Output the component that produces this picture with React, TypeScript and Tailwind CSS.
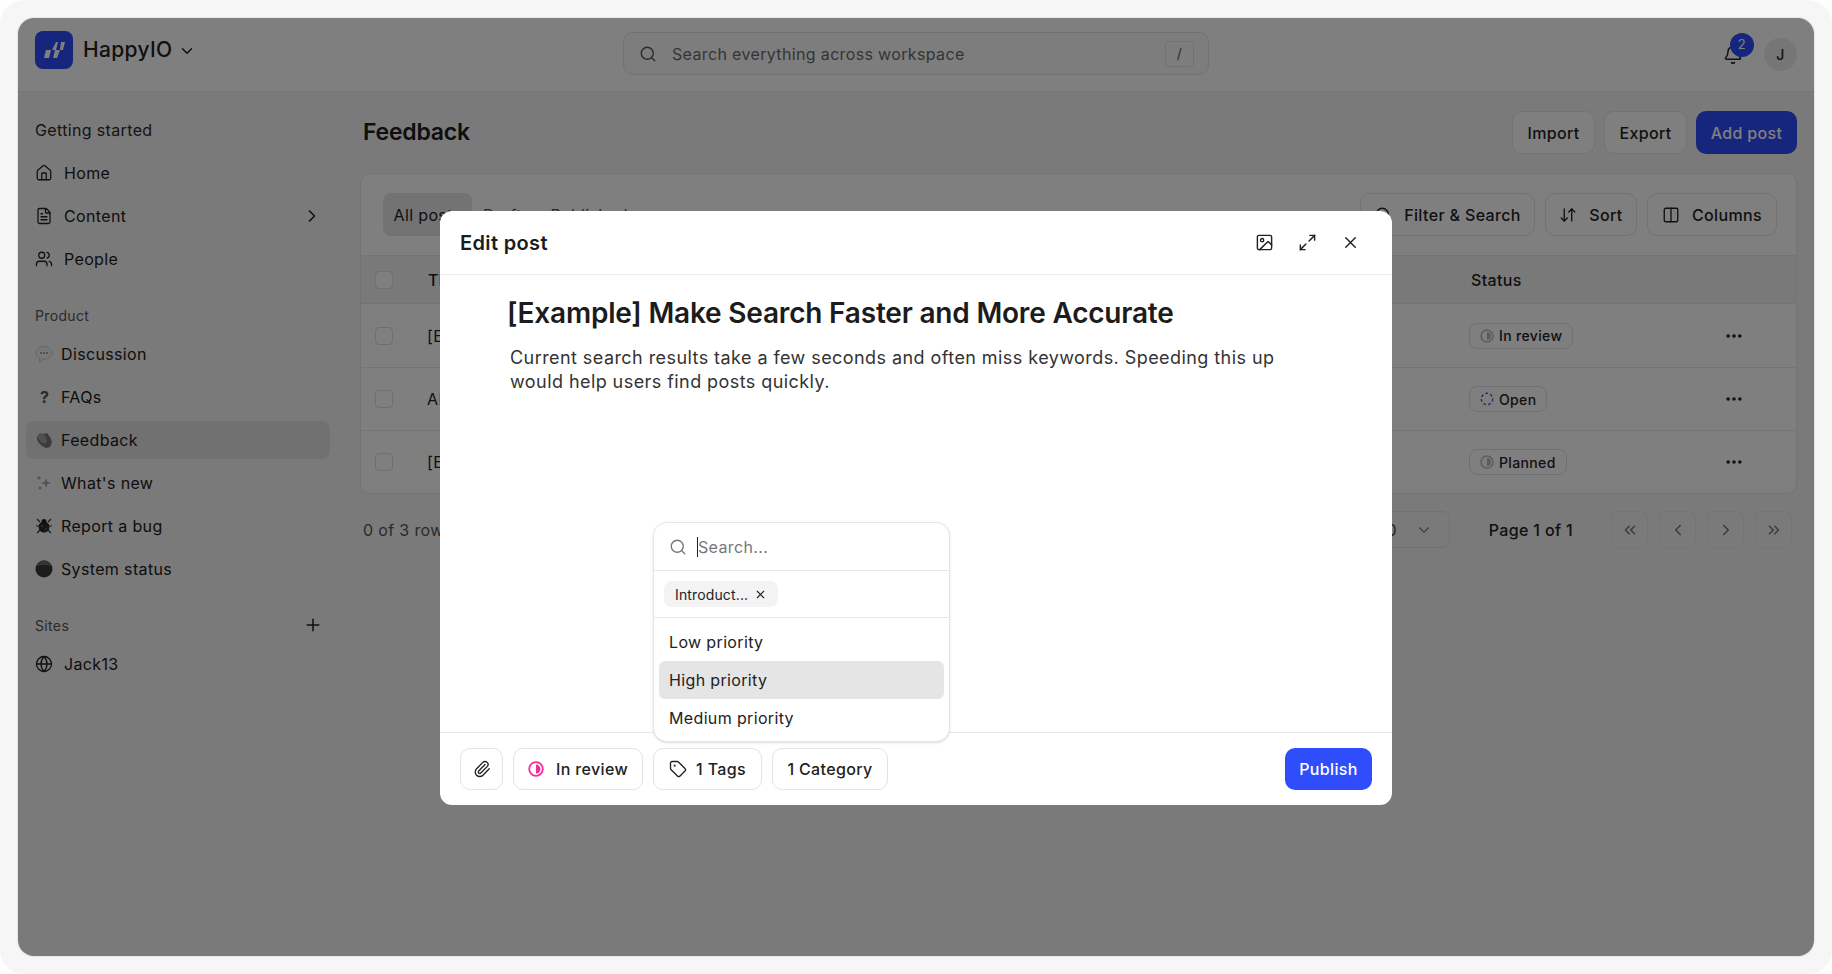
import {
  ArrowDownUp,
  ChevronDown,
  ChevronLeft,
  ChevronRight,
  ChevronsLeft,
  ChevronsRight,
  Bell,
  Columns2,
  Ellipsis,
  FileText,
  Globe,
  House,
  Image,
  Maximize2,
  Paperclip,
  Plus,
  Search,
  Tag,
  Users,
  X,
} from 'lucide-react';

const Half = ({ color, size = 16 }: { color: string; size?: number }) => (
  <svg width={size} height={size} viewBox="0 0 16 16" fill="none">
    <circle cx="8" cy="8" r="6.800" stroke={color} strokeWidth="1.800" />
    <path d="M8 3.500a4.500 4.500 0 0 1 0 9z" fill={color} />
  </svg>
);

const Dashed = () => (
  <svg width="14" height="14" viewBox="0 0 16 16" fill="none">
    <circle cx="8" cy="8" r="6.500" stroke="#4a55c8" strokeWidth="1.600" strokeDasharray="3 2.600" />
  </svg>
);

const Bubble = () => (
  <svg width="18" height="18" viewBox="0 0 18 18">
    <path d="M9 1.500c4.400 0 8 2.800 8 6.400s-3.600 6.400-8 6.400l-1 0-3.500 2.700.6-3.400C2.700 12.400 1 10.300 1 7.900 1 4.300 4.600 1.500 9 1.500z" fill="#f1f1f1" stroke="#c9c9c9" />
    <circle cx="6" cy="8" r=".8" fill="#444" />
    <circle cx="9" cy="8" r=".8" fill="#444" />
    <circle cx="12" cy="8" r=".8" fill="#444" />
  </svg>
);

const Clap = () => (
  <svg width="18" height="18" viewBox="0 0 18 18">
    <path d="M2 6l3-4 3 1 4-1 3 4 2 5-2 5-4 1-4-2-3-3-2-3z" fill="#777" />
    <path d="M2 6l3-4 3 1 3 3 1 5-3 2-4-3z" fill="#a0a0a0" />
  </svg>
);

const Sparkle = () => (
  <svg width="18" height="18" viewBox="0 0 18 18" fill="#a8a8a8">
    <path d="M11 4l1.300 3.700L16 9l-3.700 1.300L11 14l-1.300-3.700L6 9l3.700-1.300z" />
    <path d="M4 1.500l.7 1.800 1.800.7-1.800.7L4 6.500l-.7-1.800L1.500 4l1.800-.7z" />
    <path d="M5 12l.5 1.500 1.500.5-1.500.5L5 16l-.5-1.500L3 14l1.500-.5z" fill="#777" />
  </svg>
);

const Bug = () => (
  <svg width="18" height="18" viewBox="0 0 18 18" fill="none">
    <path d="M2 2l3 3M16 2l-3 3M1 9h3M17 9h-3M2 16l3-3M16 16l-3-3" stroke="#333" strokeWidth="1.200" />
    <circle cx="9" cy="10" r="5.500" fill="#2a2a2a" />
    <circle cx="9" cy="4.500" r="2.500" fill="#1e1e1e" />
    <circle cx="7" cy="9" r="1" fill="#666" />
    <circle cx="11" cy="12" r="1" fill="#666" />
  </svg>
);

const Moon = () => (
  <svg width="18" height="18" viewBox="0 0 18 18">
    <circle cx="9" cy="9" r="8.500" fill="#3a3838" />
    <path d="M1.500 6C3 2.500 6 .5 9 .5s6 2 7.500 5.500c-4-1.200-11-1.200-15 0z" fill="#6a6a6a" />
  </svg>
);

type NavItem = { label: string; icon: React.ReactNode; active?: boolean; arrow?: boolean; wide?: boolean };

const NavRow = ({ label, icon, active, arrow, wide }: NavItem) => (
  <div className={`flex h-[38px] items-center rounded-[8px] pl-[9px] pr-[8px] text-[16px] text-[#202020] ${active ? 'bg-[#e3e3e3]' : ''}`}>
    <span className={`flex h-[18px] shrink-0 items-center ${wide ? 'w-[29px]' : 'w-[26px]'}`}>{icon}</span>
    <span className="flex-1">{label}</span>
    {arrow && <ChevronRight size={20} strokeWidth={2} />}
  </div>
);

const OutlineBtn = ({ children, className = '' }: { children: React.ReactNode; className?: string }) => (
  <div className={`flex items-center justify-center rounded-[10px] border border-[#e4e4e4] bg-white text-[16px] font-[450] text-[#222] ${className}`}>
    {children}
  </div>
);

const rows = [
  { title: '[Example] Make Search Faster and More Accurate', status: 'In review', icon: <Half color="#b9b9b9" size={14} /> },
  { title: 'AI summaries for long threads', status: 'Open', icon: <Dashed /> },
  { title: '[Example] Dark mode for the dashboard', status: 'Planned', icon: <Half color="#b9b9b9" size={14} /> },
];

const Logo = () => (
  <div className="flex h-[38px] w-[38px] items-center justify-center rounded-[8px] bg-[#2f4dfa]">
    <svg width="38" height="38" viewBox="0 0 38 38" fill="#fff">
      <polygon points="11,19 16,19 14,27 9,27" />
      <polygon points="20,19 25,19 22,27 18,27" />
      <polygon points="21,11 23,11 21,19 17,19" />
      <polygon points="26,11 30,11 28,19 25,19" />
    </svg>
  </div>
);

export default function App() {
  return (
    <div className="h-[974px] w-[1832px] overflow-hidden bg-white font-['Inter',sans-serif] tracking-[0.022em]">
      <div className="h-[974px] rounded-[24px] bg-[#f6f6f6] p-[18px]">
        <div className="relative h-[938px] w-[1796px] overflow-hidden rounded-[16px] bg-[#f4f4f4] text-[#222] ring-1 ring-[#e6e6e6]">
          {/* Top bar */}
          <header className="grid h-[74px] grid-cols-[1fr_586px_1fr] items-center border-b border-[#ececec] bg-white px-[17px]">
            <div className="mb-[9px] flex items-center">
              <Logo />
              <span className="ml-[10px] text-[21px] font-medium">HappyIO</span>
              <ChevronDown size={18} strokeWidth={2} className="ml-[5px] mt-[1px]" />
            </div>
            <div className="mb-[2px] flex h-[43px] items-center rounded-[10px] border border-[#e2e2e2] bg-[#fafafa] pl-[15px] pr-[14px]">
              <Search size={18} strokeWidth={1.8} className="text-[#555]" />
              <span className="ml-[15px] flex-1 text-[16px] text-[#6b6b6b]">Search everything across workspace</span>
              <span className="flex h-[26px] w-[29px] items-center justify-center rounded-[4px] border border-[#e4e4e4] text-[14px] text-[#555]">/</span>
            </div>
            <div className="flex items-center justify-end">
              <div className="relative mr-[21px] mt-[1px]">
                <Bell size={20} strokeWidth={1.8} />
                <span className="absolute -right-[11px] -top-[12px] flex h-[24px] w-[24px] items-center justify-center rounded-full bg-[#2f4dfa] text-[13px] text-white">2</span>
              </div>
              <div className="flex h-[33px] w-[33px] items-center justify-center rounded-full bg-[#ededed] text-[14px] font-medium">J</div>
            </div>
          </header>

          <div className="flex">
            {/* Sidebar */}
            <aside className="w-[322px] shrink-0 pl-[8px] pr-[10px] pt-[28px]">
              <div className="flex h-[20px] items-center pl-[9px] text-[16px] text-[#2a2a2a]">Getting started</div>
              <div className="mt-[14px] flex flex-col gap-[5px]">
                <NavRow label="Home" icon={<House size={18} strokeWidth={1.7} />} wide />
                <NavRow label="Content" icon={<FileText size={18} strokeWidth={1.7} />} arrow wide />
                <NavRow label="People" icon={<Users size={18} strokeWidth={1.7} />} wide />
              </div>
              <div className="mt-[27px] flex h-[20px] items-center pl-[9px] text-[14px] text-[#555]">Product</div>
              <div className="mt-[10px] flex flex-col gap-[5px]">
                <NavRow label="Discussion" icon={<Bubble />} />
                <NavRow label="FAQs" icon={<span className="pl-[5px] text-[16px] font-bold text-[#555]">?</span>} />
                <NavRow label="Feedback" icon={<Clap />} active />
                <NavRow label="What's new" icon={<Sparkle />} />
                <NavRow label="Report a bug" icon={<Bug />} />
                <NavRow label="System status" icon={<Moon />} />
              </div>
              <div className="mt-[27px] flex h-[20px] items-center justify-between pl-[9px] pr-[7px] text-[14px] text-[#555]">
                Sites
                <Plus size={20} strokeWidth={1.8} className="text-[#222]" />
              </div>
              <div className="mt-[10px]">
                <NavRow label="Jack13" icon={<Globe size={18} strokeWidth={1.7} />} wide />
              </div>
            </aside>

            {/* Main */}
            <main className="min-w-0 flex-1 pl-[20px] pr-[17px] pt-[19px]">
              <div className="flex items-center justify-between">
                <h1 className="ml-[3px] text-[23px] font-semibold tracking-[-0.01em] text-[#1c1c1c]">Feedback</h1>
                <div className="flex gap-[9px]">
                  <OutlineBtn className="h-[43px] w-[83px]">Import</OutlineBtn>
                  <OutlineBtn className="h-[43px] w-[83px]">Export</OutlineBtn>
                  <div className="flex h-[43px] w-[101px] items-center justify-center rounded-[10px] bg-[#2f4dfa] text-[16px] font-[450] text-white">Add post</div>
                </div>
              </div>

              <div className="mt-[19px] overflow-hidden rounded-[10px] border border-[#e6e6e6] bg-white">
                <div className="flex h-[81px] items-center justify-between pl-[22px] pr-[19px]">
                  <div className="flex items-center text-[16px]">
                    <span className="flex h-[43px] w-[89px] items-center justify-center rounded-[8px] bg-[#e6e6e6]">All posts</span>
                    <span className="ml-[11px] text-[#555]">Drafts</span>
                    <span className="ml-[20px] text-[#555]">Published</span>
                  </div>
                  <div className="flex gap-[10px]">
                    <OutlineBtn className="h-[43px] w-[175px] gap-[12px]"><Search size={18} strokeWidth={1.8} />Filter &amp; Search</OutlineBtn>
                    <OutlineBtn className="h-[43px] w-[92px] gap-[12px]"><ArrowDownUp size={18} strokeWidth={1.8} />Sort</OutlineBtn>
                    <OutlineBtn className="h-[43px] w-[130px] gap-[12px]"><Columns2 size={18} strokeWidth={1.8} />Columns</OutlineBtn>
                  </div>
                </div>
                <div className="flex h-[49px] items-center border-y border-[#e8e8e8] bg-[#f3f3f3] pl-[14px] pr-[52px] text-[16px] font-[450]">
                  <span className="h-[18px] w-[18px] rounded-[4px] border border-[#dedede] bg-white" />
                  <span className="ml-[35px] flex-1">Title</span>
                  <span className="w-[275px] pl-[2px]">Status</span>
                </div>
                {rows.map((row, i) => (
                  <div key={row.status} className={`flex h-[63px] items-center pl-[14px] pr-[52px] ${i > 0 ? 'border-t border-[#e8e8e8]' : ''}`}>
                    <span className="h-[18px] w-[18px] rounded-[4px] border border-[#dedede] bg-white" />
                    <span className="ml-[34px] flex-1 text-[16px]">{row.title}</span>
                    <div className="flex w-[255px]">
                      <span className="inline-flex h-[26px] items-center gap-[5px] rounded-[8px] border border-[#e0e0e0] px-[10px] text-[14px] font-[450]">
                        {row.icon}
                        {row.status}
                      </span>
                    </div>
                    <Ellipsis size={20} strokeWidth={2.4} />
                  </div>
                ))}
              </div>

              <div className="mt-[17px] flex h-[37px] items-center justify-between text-[16px]">
                <span className="ml-[3px] text-[#555]">0 of 3 rows selected</span>
                <div className="mr-[5px] flex items-center">
                  <span className="mr-[16px] text-[15px] font-[450]">Rows per page</span>
                  <div className="flex h-[37px] w-[90px] items-center justify-between rounded-[8px] border border-[#e4e4e4] pl-[19px] pr-[16px] text-[#444]">
                    10
                    <ChevronDown size={18} strokeWidth={1.8} className="text-[#888]" />
                  </div>
                  <span className="ml-[39px] mr-[38px] font-[450]">Page 1 of 1</span>
                  <div className="flex gap-[11px] text-[#777]">
                    <span className="flex h-[37px] w-[37px] items-center justify-center rounded-[8px] border border-[#ebebeb]"><ChevronsLeft size={18} /></span>
                    <span className="flex h-[37px] w-[37px] items-center justify-center rounded-[8px] border border-[#ebebeb]"><ChevronLeft size={18} /></span>
                    <span className="flex h-[37px] w-[37px] items-center justify-center rounded-[8px] border border-[#ebebeb]"><ChevronRight size={18} /></span>
                    <span className="flex h-[37px] w-[37px] items-center justify-center rounded-[8px] border border-[#ebebeb]"><ChevronsRight size={18} /></span>
                  </div>
                </div>
              </div>
            </main>
          </div>

          {/* Dim layer */}
          <div className="absolute inset-0 bg-black/50" />

          {/* Edit post dialog */}
          <div className="absolute left-[422px] top-[193px] flex h-[594px] w-[952px] flex-col rounded-[12px] bg-white">
            <div className="flex h-[64px] items-center justify-between border-b border-[#ececec] pl-[20px] pr-[32px]">
              <h2 className="text-[20px] font-semibold text-[#1c1c1c]">Edit post</h2>
              <div className="flex items-center gap-[24px] text-[#222]">
                <Image size={19} strokeWidth={1.8} />
                <Maximize2 size={19} strokeWidth={1.8} />
                <X size={19} strokeWidth={1.8} />
              </div>
            </div>
            <div className="flex-1 pl-[67px] pr-[100px] pt-[19px]">
              <h3 className="text-[28px] font-semibold leading-[38px] tracking-[-0.007em] text-[#1c1c1c]">[Example] Make Search Faster and More Accurate</h3>
              <p className="ml-[3px] mt-[14px] text-[18px] leading-[24px] tracking-[0.024em] text-[#333]">
                Current search results take a few seconds and often miss keywords. Speeding this up would help users find posts quickly.
              </p>
            </div>
            <div className="flex h-[73px] items-center justify-between border-t border-[#e8e8e8] px-[20px]">
              <div className="flex gap-[10px] text-[#222]">
                <OutlineBtn className="h-[42px] w-[43px]"><Paperclip size={18} strokeWidth={1.8} /></OutlineBtn>
                <OutlineBtn className="h-[42px] w-[130px] gap-[12px]"><Half color="#f0309a" />In review</OutlineBtn>
                <OutlineBtn className="h-[42px] w-[109px] gap-[9px]"><Tag size={18} strokeWidth={1.8} />1 Tags</OutlineBtn>
                <OutlineBtn className="h-[42px] w-[116px]">1 Category</OutlineBtn>
              </div>
              <div className="flex h-[42px] w-[87px] items-center justify-center rounded-[10px] bg-[#2f4dfa] text-[16px] font-[450] text-white">Publish</div>
            </div>

            {/* Tag picker */}
            <div className="absolute left-[213px] top-[311px] w-[297px] rounded-[14px] border border-[#e6e6e6] bg-white shadow-sm">
              <div className="flex h-[48px] items-center border-b border-[#e8e8e8] pl-[15px]">
                <Search size={18} strokeWidth={1.8} className="text-[#777]" />
                <span className="ml-[10px] h-[20px] w-px bg-[#222]" />
                <span className="text-[16px] text-[#777]">Search...</span>
              </div>
              <div className="flex h-[47px] items-center border-b border-[#e8e8e8] pl-[10px]">
                <span className="flex h-[26px] items-center gap-[6px] rounded-[8px] bg-[#f3f3f3] px-[11px] text-[14px] tracking-[0.01em] text-[#222]">
                  Introduct...
                  <X size={13} strokeWidth={2} />
                </span>
              </div>
              <div className="flex flex-col px-[5px] pb-[4px] pt-[5px] text-[16px] text-[#222]">
                <div className="flex h-[38px] items-center px-[10px]">Low priority</div>
                <div className="flex h-[38px] items-center rounded-[6px] bg-[#e5e5e5] px-[10px]">High priority</div>
                <div className="flex h-[38px] items-center px-[10px]">Medium priority</div>
              </div>
            </div>
          </div>
        </div>
      </div>
    </div>
  );
}
